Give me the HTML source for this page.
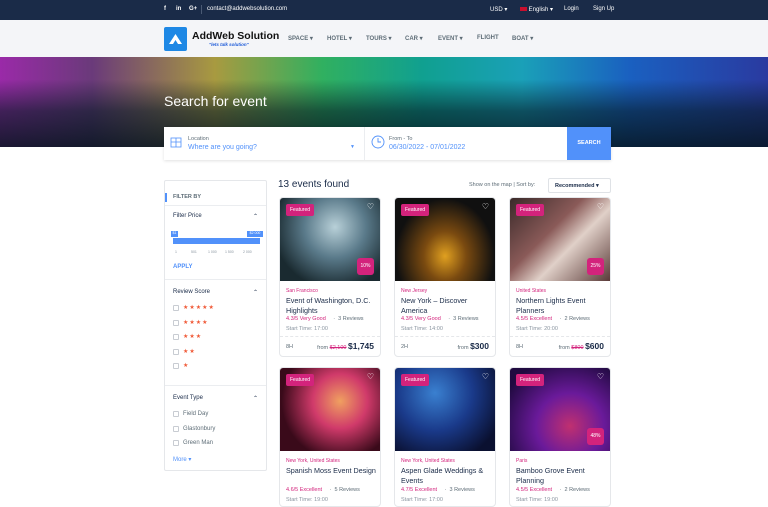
<!DOCTYPE html>
<html><head><meta charset="utf-8"><style>
*{box-sizing:border-box;margin:0;padding:0}
body{width:768px;height:500px;overflow:hidden;background:#fff;font-family:"Liberation Sans",sans-serif;color:#1a2b48;position:relative}
.abs{position:absolute}
.top{left:0;top:0;width:768px;height:20px;background:#1a2b48;color:#fff;font-size:6px}
.hdr{left:0;top:20px;width:768px;height:37px;background:#f4f5f8}
.nav span{position:absolute;top:35px;font-size:6px;font-weight:bold;color:#5e6d77}
.hero{left:0;top:57px;width:768px;height:90px;background:
linear-gradient(to bottom,rgba(0,0,0,0) 25%,rgba(5,25,35,.6) 60%,rgba(5,20,30,.85)),
linear-gradient(90deg,#9a2aa8 0%,#6a3a7a 12%,#a89a40 28%,#30b060 42%,#10a090 55%,#1aa0b8 68%,#1a60c0 82%,#2a3aa0 100%)}
.search{left:164px;top:127px;width:447px;height:33px;background:#fff;box-shadow:0 1px 3px rgba(0,0,0,.12)}
.side{left:164px;top:180px;width:103px;height:291px;border:1px solid #e5e7ea;border-radius:2px;background:#fff}
.sec{position:absolute;left:0;width:101px;border-top:1px solid #ebedf0}
.lbl{position:absolute;left:8px;font-size:6px;color:#1a2b48}
.cb{position:absolute;left:8px;width:6px;height:6px;border:1px solid #c8ccd2;border-radius:1px}
.st{position:absolute;left:18px;font-size:6px;color:#f05a38;letter-spacing:1px}
.card{position:absolute;width:102px;border:1px solid #e5e7ea;border-radius:4px;background:#fff;overflow:hidden}
.img{height:83px;position:relative}
.feat{position:absolute;left:6px;top:6px;background:#d3237c;color:#fff;font-size:5px;padding:3px 4px;border-radius:2px}
.heart{position:absolute;right:6px;top:4px;color:#fff;font-size:8px}
.disc{position:absolute;right:6px;bottom:6px;width:17px;height:17px;background:#d3237c;color:#fff;font-size:5px;border-radius:3px;text-align:center;line-height:17px}
.loc{position:absolute;left:6px;top:90px;font-size:5px;color:#d3237c}
.tt{position:absolute;left:6px;top:98px;font-size:7.2px;line-height:9.5px;color:#1a2b48;width:92px}
.rt{position:absolute;left:6px;top:118px;font-size:5.5px;color:#d3237c}
.rt b{font-weight:normal;color:#5e6d77;margin-left:6px}
.tm{position:absolute;left:6px;top:128px;font-size:5.5px;color:#8a95a0}
.ft{position:absolute;left:0;top:138px;width:100%;border-top:1px dashed #e5e7ea;height:20px;font-size:5.5px;color:#5e6d77}
.ft .d{position:absolute;left:6px;top:7px}
.ft .p{position:absolute;right:6px;top:4px}
.ft .p big{font-size:8.5px;color:#1a2b48;font-weight:bold}
.ft s{color:#d3237c}
.sc{position:absolute;top:69px;font-size:3.5px;color:#8a95a0}
</style></head><body>
<div class="abs top">
<span class="abs" style="left:164px;top:6px;font-weight:bold">f</span>
<span class="abs" style="left:176px;top:6px;font-weight:bold">in</span>
<span class="abs" style="left:189px;top:6px;font-weight:bold">G+</span>
<span class="abs" style="left:201px;top:5px;height:9px;border-left:1px solid #4a5a74"></span>
<span class="abs" style="left:207px;top:6px">contact@addwebsolution.com</span>
<span class="abs" style="left:490px;top:6px">USD ▾</span>
<span class="abs" style="left:520px;top:6px"><span style="display:inline-block;width:7px;height:4px;background:#c8102e;vertical-align:middle"></span> English ▾</span>
<span class="abs" style="left:564px;top:6px">Login</span>
<span class="abs" style="left:593px;top:6px">Sign Up</span>
</div>
<div class="abs hdr"></div>
<div class="abs" style="left:164px;top:27px;width:23px;height:24px;background:#1e88e5;border-radius:2px"></div>
<svg class="abs" style="left:167px;top:32px" width="17" height="14"><polygon points="8.5,2 15,12 11,12 8.5,8 6,12 2,12" fill="#fff"/></svg>
<div class="abs" style="left:192px;top:30px;font-size:10.5px;font-weight:bold;color:#111">AddWeb Solution</div>
<div class="abs" style="left:209px;top:42px;font-size:4.5px;font-weight:bold;color:#1e5bd8;font-style:italic">"lets talk solution"</div>
<div class="nav">
<span style="left:288px">SPACE ▾</span><span style="left:327px">HOTEL ▾</span><span style="left:366px">TOURS ▾</span><span style="left:405px">CAR ▾</span><span style="left:438px">EVENT ▾</span><span style="left:477px">FLIGHT</span><span style="left:512px">BOAT ▾</span>
</div>
<div class="abs hero"></div>
<div class="abs" style="left:164px;top:93px;color:#fff;font-size:14px">Search for event</div>
<div class="abs search">
<svg class="abs" style="left:6px;top:10px" width="12" height="11" fill="none" stroke="#5191fa" stroke-width=".8"><rect x="1" y="1" width="10" height="9"/><path d="M1 5h10M6 1v9"/></svg>
<div class="abs" style="left:24px;top:9px;font-size:5.5px;color:#5e6d77">Location</div>
<div class="abs" style="left:24px;top:17px;font-size:7px;color:#5191fa">Where are you going?</div>
<div class="abs" style="left:186px;top:17px;font-size:5px;color:#5191fa">▼</div>
<div class="abs" style="left:200px;top:0;height:33px;border-left:1px solid #ebedf0"></div>
<svg class="abs" style="left:207px;top:8px" width="14" height="14" fill="none" stroke="#5191fa" stroke-width=".9"><circle cx="7" cy="7" r="6"/><path d="M7 3v4h3"/></svg>
<div class="abs" style="left:225px;top:9px;font-size:5.5px;color:#5e6d77">From - To</div>
<div class="abs" style="left:225px;top:17px;font-size:7px;color:#5191fa">06/30/2022 - 07/01/2022</div>
<div class="abs" style="left:403px;top:0;width:44px;height:33px;background:#5191fa;color:#fff;font-size:5.5px;font-weight:bold;text-align:center;line-height:33px">SEARCH</div>
</div>
<div class="abs" style="left:278px;top:179px;font-size:10px;color:#1a2b48">13 events found</div>
<div class="abs" style="left:469px;top:182px;font-size:5.5px;color:#5e6d77">Show on the map | Sort by:</div>
<div class="abs" style="left:548px;top:178px;width:63px;height:15px;border:1px solid #dfe2e6;border-radius:2px;font-size:5.5px;font-weight:bold;color:#1a2b48;padding:4px 0 0 6px">Recommended ▾</div>
<div class="abs side">
<div class="abs" style="left:0;top:12px;height:9px;border-left:2px solid #5191fa"></div>
<div class="lbl" style="top:13px;font-weight:bold;font-size:5.5px;color:#5e6d77">FILTER BY</div>
<div class="sec" style="top:24px"></div>
<div class="lbl" style="top:32px">Filter Price</div><div class="abs" style="left:88px;top:32px;font-size:6px">⌃</div>
<div class="abs" style="left:6px;top:50px;width:7px;height:6px;background:#5191fa;color:#fff;font-size:3.5px;text-align:center">$1</div>
<div class="abs" style="left:82px;top:50px;width:16px;height:6px;background:#5191fa;color:#fff;font-size:3.5px;text-align:center">$2 000</div>
<div class="abs" style="left:8px;top:57px;width:87px;height:6px;background:#5191fa"></div>
<span class="sc" style="left:10px">1</span><span class="sc" style="left:26px">501</span><span class="sc" style="left:43px">1 000</span><span class="sc" style="left:60px">1 500</span><span class="sc" style="left:78px">2 000</span>
<div class="lbl" style="top:83px;color:#5191fa;font-weight:bold">APPLY</div>
<div class="sec" style="top:98px"></div>
<div class="lbl" style="top:108px">Review Score</div><div class="abs" style="left:88px;top:108px;font-size:6px">⌃</div>
<div class="cb" style="top:124px"></div><div class="st" style="top:123px">★★★★★</div>
<div class="cb" style="top:139px"></div><div class="st" style="top:138px">★★★★</div>
<div class="cb" style="top:153px"></div><div class="st" style="top:152px">★★★</div>
<div class="cb" style="top:168px"></div><div class="st" style="top:167px">★★</div>
<div class="cb" style="top:182px"></div><div class="st" style="top:181px">★</div>
<div class="sec" style="top:204px"></div>
<div class="lbl" style="top:214px">Event Type</div><div class="abs" style="left:88px;top:214px;font-size:6px">⌃</div>
<div class="cb" style="top:230px"></div><div class="lbl" style="left:18px;top:230px;color:#5e6d77">Field Day</div>
<div class="cb" style="top:245px"></div><div class="lbl" style="left:18px;top:245px;color:#5e6d77">Glastonbury</div>
<div class="cb" style="top:259px"></div><div class="lbl" style="left:18px;top:259px;color:#5e6d77">Green Man</div>
<div class="lbl" style="top:275px;color:#5191fa">More ▾</div>
</div>

<div class="card" style="left:279px;top:197px;height:160px"><div class="img" style="background:radial-gradient(circle at 55% 35%,#b8d0d8,#5a7a8a 40%,#1a2a30 80%)"><div class="feat">Featured</div><div class="heart">♡</div><div class="disc">10%</div></div>
<div class="loc">San Francisco</div><div class="tt">Event of Washington, D.C. Highlights</div><div class="rt">4.3/5 Very Good <b>· &nbsp;3 Reviews</b></div><div class="tm">Start Time: 17:00</div><div class="ft"><span class="d">8H</span><span class="p">from <s>$2,100</s> <big>$1,745</big></span></div></div>

<div class="card" style="left:394px;top:197px;height:160px"><div class="img" style="background:radial-gradient(ellipse at 50% 70%,#e0a020,#7a4a10 30%,#101010 70%)"><div class="feat">Featured</div><div class="heart">♡</div></div>
<div class="loc">New Jersey</div><div class="tt">New York – Discover America</div><div class="rt">4.3/5 Very Good <b>· &nbsp;3 Reviews</b></div><div class="tm">Start Time: 14:00</div><div class="ft"><span class="d">2H</span><span class="p">from <big>$300</big></span></div></div>

<div class="card" style="left:509px;top:197px;height:160px"><div class="img" style="background:linear-gradient(135deg,#3a2a2a,#8a5a58 40%,#e0d0c8 60%,#5a3a38)"><div class="feat">Featured</div><div class="heart">♡</div><div class="disc">25%</div></div>
<div class="loc">United States</div><div class="tt">Northern Lights Event Planners</div><div class="rt">4.5/5 Excellent <b>· &nbsp;2 Reviews</b></div><div class="tm">Start Time: 20:00</div><div class="ft"><span class="d">8H</span><span class="p">from <s>$800</s> <big>$600</big></span></div></div>

<div class="card" style="left:279px;top:367px;height:140px"><div class="img" style="background:radial-gradient(circle at 60% 40%,#f0a060,#d03a6a 35%,#3a0a1a 75%)"><div class="feat">Featured</div><div class="heart">♡</div></div>
<div class="loc">New York, United States</div><div class="tt">Spanish Moss Event Design</div><div class="rt" style="top:119px">4.6/5 Excellent <b>· &nbsp;5 Reviews</b></div><div class="tm" style="top:129px">Start Time: 19:00</div></div>

<div class="card" style="left:394px;top:367px;height:140px"><div class="img" style="background:radial-gradient(circle at 40% 30%,#3a80d0,#1a3a8a 45%,#0a1030 85%)"><div class="feat">Featured</div><div class="heart">♡</div></div>
<div class="loc">New York, United States</div><div class="tt">Aspen Glade Weddings &amp; Events</div><div class="rt" style="top:119px">4.7/5 Excellent <b>· &nbsp;3 Reviews</b></div><div class="tm" style="top:129px">Start Time: 17:00</div></div>

<div class="card" style="left:509px;top:367px;height:140px"><div class="img" style="background:radial-gradient(ellipse at 60% 70%,#c03070,#6a1a9a 40%,#200a40 85%)"><div class="feat">Featured</div><div class="heart">♡</div><div class="disc">48%</div></div>
<div class="loc">Paris</div><div class="tt">Bamboo Grove Event Planning</div><div class="rt" style="top:119px">4.5/5 Excellent <b>· &nbsp;2 Reviews</b></div><div class="tm" style="top:129px">Start Time: 19:00</div></div>
</body></html>
